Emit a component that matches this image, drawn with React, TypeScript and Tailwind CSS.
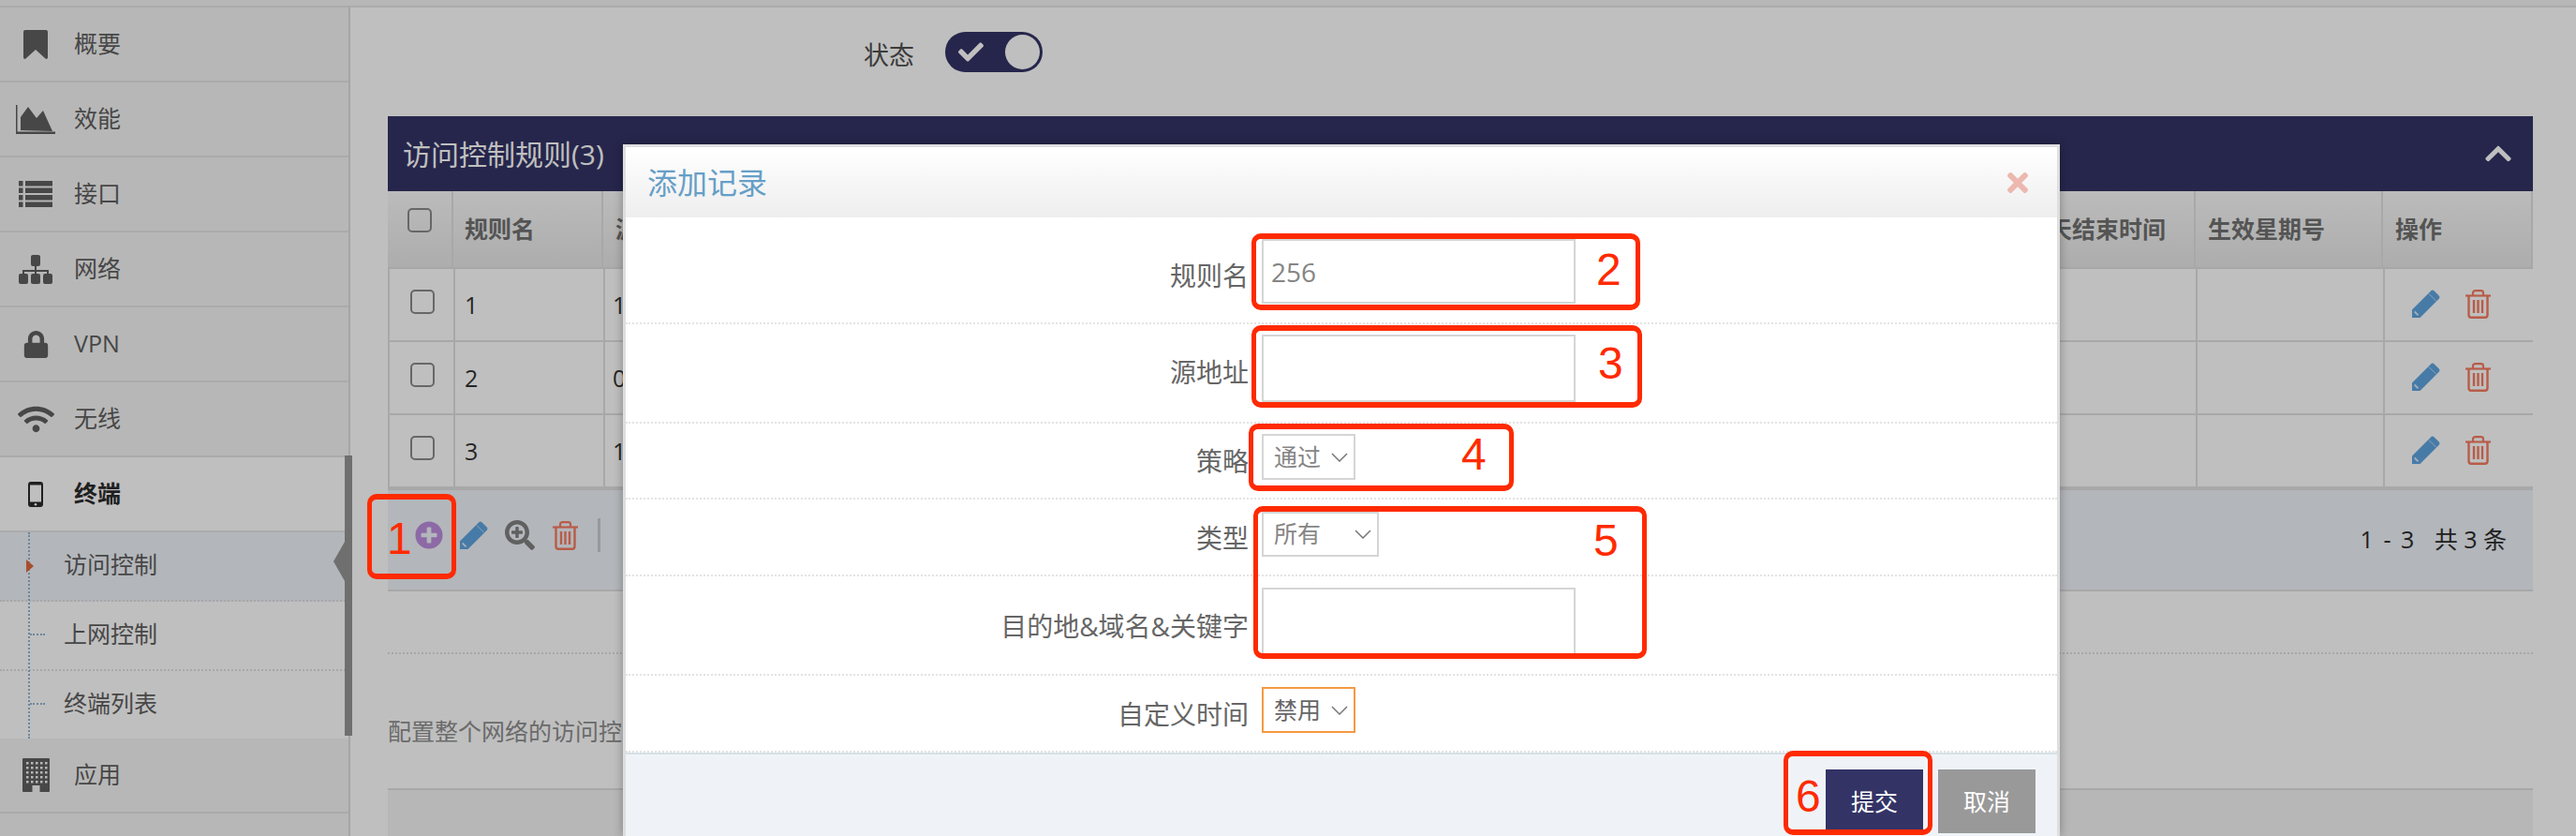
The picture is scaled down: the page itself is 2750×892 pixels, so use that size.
import React from 'react';
import {
  FaCheck,
  FaChevronUp,
  FaLock,
  FaPlusCircle,
  FaSearchPlus,
  FaTimes,
  FaWifi,
} from 'react-icons/fa';

const BookmarkIcon = () => (
  <svg width="26" height="31" viewBox="0 0 26 31" fill="currentColor">
    <path d="M2 0h22a2 2 0 0 1 2 2v27c0 2-1.500 2.500-2.500 1.500L13 21 2.500 30.500C1.500 31.500 0 31 0 29V2a2 2 0 0 1 2-2z" />
  </svg>
);

const AreaChartIcon = () => (
  <svg width="42" height="31" viewBox="0 0 42 31" fill="currentColor">
    <path d="M0 0h1.500v28.500H42V31H0z" />
    <path d="M5 27V13L13 2l9 12L29 6l10 22z" />
  </svg>
);

const ListIcon = () => (
  <svg width="36" height="29" viewBox="0 0 36 29" fill="currentColor">
    {[0, 7.500, 15, 22.500].map((y) => (
      <g key={y}>
        <rect x="0" y={y} width="4.500" height="5.500" />
        <rect x="7" y={y} width="29" height="5.500" />
      </g>
    ))}
  </svg>
);

const SitemapIcon = () => (
  <svg width="36" height="31" viewBox="0 0 36 31" fill="currentColor">
    <rect x="13" y="0" width="10" height="12" rx="2" />
    <path d="M17 12h2v4h13v5h-2v-3H19v3h-2v-3H6v3H4v-5h13z" />
    <rect x="0" y="20" width="10" height="11" rx="2" />
    <rect x="13" y="20" width="10" height="11" rx="2" />
    <rect x="26" y="20" width="10" height="11" rx="2" />
  </svg>
);

const PhoneIcon = () => (
  <svg width="16" height="27" viewBox="0 0 16 27">
    <rect x="0" y="0" width="16" height="27" rx="3" fill="currentColor" />
    <rect x="2" y="3.500" width="12" height="18" fill="#ffffff" />
    <circle cx="8" cy="24.200" r="1.300" fill="#ffffff" />
  </svg>
);

const BuildingIcon = () => (
  <svg width="29" height="36" viewBox="0 0 29 36">
    <rect width="29" height="36" rx="1" fill="currentColor" />
    {[4, 9, 14, 19, 24].map((y) =>
      [5, 10, 15, 20, 25].map((x) => (
        <rect key={`${x}-${y}`} x={x - 1} y={y} width="2.500" height="2.500" fill="#f5f5f5" />
      )),
    )}
    <rect x="10.500" y="29" width="8" height="7" fill="#f5f5f5" />
  </svg>
);

const PencilIcon = (props: { className?: string }) => (
  <svg width="30" height="30" viewBox="0 0 30 30" className={props.className}>
    <path
      fill="currentColor"
      d="M0 30v-8.500L20 1.500c1.200-1.200 2.500-1.200 3.700 0l4.800 4.800c1.200 1.200 1.200 2.500 0 3.700L8.500 30z"
    />
    <path stroke="#ffffff" strokeOpacity="0.6" strokeWidth="1" d="M18 4.500l7.500 7.500" />
    <path fill="#ffffff" fillOpacity="0.75" d="M3 22.500l4.500 4.500-2 .8-3.300-3.300z" />
  </svg>
);

const TrashIcon = (props: { className?: string }) => (
  <svg width="27" height="31" viewBox="0 0 27 31" fill="none" stroke="currentColor" className={props.className}>
    <path strokeWidth="2.200" d="M0 6.500h27" />
    <path strokeWidth="2.200" d="M8 6V3.500C8 2 9 1.200 10.500 1.200h6C18 1.200 19 2 19 3.500V6" />
    <path strokeWidth="2.400" d="M3.500 6.500V27c0 1.800 1 2.800 2.800 2.800h14.400c1.800 0 2.800-1 2.800-2.800V6.500" />
    <path strokeWidth="2.400" d="M9 11v14M13.500 11v14M18 11v14" />
  </svg>
);

const ChevronDown = () => (
  <svg width="18" height="10" viewBox="0 0 18 10" fill="none" stroke="#777777" strokeWidth="1.500">
    <path d="M1 1l8 8 8-8" />
  </svg>
);

const topNav = [
  { name: '概要', icon: <BookmarkIcon /> },
  { name: '效能', icon: <AreaChartIcon /> },
  { name: '接口', icon: <ListIcon /> },
  { name: '网络', icon: <SitemapIcon /> },
  { name: 'VPN', icon: <FaLock className="text-[29px]" /> },
  { name: '无线', icon: <FaWifi className="text-[39px]" /> },
];

const NavItem = (props: { name: string; icon: React.ReactNode }) => {
  return (
    <div className="flex h-[80px] items-center border-b-2 border-[#e5e5e5] text-[25px] text-[#5f5f5f]">
      <div className="flex w-[76px] justify-center">{props.icon}</div>
      <div className="ml-[3px]">{props.name}</div>
    </div>
  );
};

const SubItem = (props: { name: string; active?: boolean; last?: boolean }) => {
  const { name, active, last } = props;
  return (
    <div
      className={`relative flex items-center pb-[2px] pl-[68px] text-[25px] text-[#5f5f5f] ${
        active ? 'bg-[#eff3f8]' : 'bg-white'
      } ${last ? 'h-[72px]' : 'h-[74px] border-b-2 border-dotted border-[#dfdfdf]'}`}
    >
      {!active && (
        <div className="absolute left-[32px] top-[34px] w-[16px] border-t-2 border-dotted border-[#8fb5d6]" />
      )}
      {name}
    </div>
  );
};

const Sidebar = () => {
  return (
    <aside className="relative w-[374px] shrink-0 border-r-2 border-[#dcdcdc] bg-[#f5f5f5]">
      {topNav.map((item) => (
        <NavItem key={item.name} {...item} />
      ))}
      <div className="flex h-[80px] items-center border-b-2 border-[#e5e5e5] bg-white text-[25px] font-bold text-[#2b2b2b]">
        <div className="flex w-[76px] justify-center">
          <PhoneIcon />
        </div>
        <div className="ml-[3px]">终端</div>
      </div>
      <div className="relative">
        <SubItem name="访问控制" active />
        <SubItem name="上网控制" />
        <SubItem name="终端列表" last />
        <div className="absolute bottom-0 left-[30px] top-0 border-l-2 border-dotted border-[#8fb5d6]" />
        <div className="absolute left-[28px] top-[29px] h-0 w-0 border-y-[7px] border-l-[8px] border-y-transparent border-l-[#e0693f]" />
      </div>
      <NavItem name="应用" icon={<BuildingIcon />} />
      <div className="absolute left-[356px] top-[570px] h-0 w-0 border-y-[21px] border-r-[12px] border-y-transparent border-r-[#959595]" />
      <div className="absolute left-[368px] top-[478px] h-[299px] w-[8px] bg-[#959595]" />
    </aside>
  );
};

const Checkbox = (props: { className?: string }) => {
  return (
    <div
      className={`h-[26px] w-[26px] rounded-[5px] border-2 border-[#8a8a8a] ${props.className}`}
    />
  );
};

const RowActions = () => {
  return (
    <div className="-mt-[2px] flex items-center gap-[27px] pl-[29px]">
      <PencilIcon className="text-[#5fa4df]" />
      <TrashIcon className="text-[#f67b61]" />
    </div>
  );
};

const rules = [
  { name: '1', source: '1' },
  { name: '2', source: '0' },
  { name: '3', source: '1' },
];

const RuleTable = () => {
  return (
    <section className="mt-[47px] text-[25px]">
      <div className="flex h-[80px] items-center justify-between bg-[#333366] pl-[16px] pr-[21px] text-[30px] text-white">
        <span>访问控制规则(3)</span>
        <FaChevronUp className="text-[32px]" />
      </div>
      <div className="grid h-[83px] grid-cols-[70px_160px_1700px_200px_160px] border-b-2 border-[#dfdfdf] bg-gradient-to-b from-[#fafafa] to-[#e7e7e7] font-bold text-[#707070]">
        <div className="border-r-2 border-[#e1e1e1] pl-[21px] pt-[18px]">
          <Checkbox />
        </div>
        <div className="flex items-center border-r-2 border-[#e1e1e1] pl-[12px]">规则名</div>
        <div className="flex items-center whitespace-nowrap border-r-2 border-[#e1e1e1] pl-[13px]">
          源地址
          <span className="ml-[1430px]">每天结束时间</span>
        </div>
        <div className="flex items-center border-r-2 border-[#e1e1e1] pl-[13px]">生效星期号</div>
        <div className="flex items-center border-r-2 border-[#e1e1e1] pl-[13px]">操作</div>
      </div>
      {rules.map((rule) => (
        <div
          key={rule.name}
          className="grid h-[78px] grid-cols-[72px_160px_1700px_200px_158px] border-b-2 border-[#e1e1e1] text-[#333333]"
        >
          <div className="flex items-center border-x-2 border-x-[#e1e1e1] pl-[22px]">
            <Checkbox className="-mt-[6px]" />
          </div>
          <div className="flex items-center border-r-2 border-[#e1e1e1] pl-[10px] pt-[2px]">{rule.name}</div>
          <div className="flex items-center border-r-2 border-[#e1e1e1] pl-[8px] pt-[2px]">{rule.source}</div>
          <div className="border-r-2 border-[#e1e1e1]" />
          <RowActions />
        </div>
      ))}
      <div className="h-[2px] bg-[#dfdfdf]" />
      <div className="flex h-[108px] items-center justify-between border-b-2 border-[#e1e1e1] bg-[#eff3f8] pl-[29px] pr-[28px]">
        <div className="-mt-[10px] flex items-center">
          <FaPlusCircle className="text-[30px] text-[#bc8dde]" />
          <PencilIcon className="ml-[18px] text-[#5fa4df]" />
          <FaSearchPlus className="ml-[18px] text-[32px] text-[#808080]" />
          <TrashIcon className="ml-[19px] text-[#f67b61]" />
          <div className="ml-[21px] h-[36px] w-[3px] bg-[#c8cdd2]" />
        </div>
        <div className="text-[#2b2b2b]">
          <span className="tracking-[2px]">1 - 3</span>&nbsp;&nbsp;&nbsp;共 3 条
        </div>
      </div>
    </section>
  );
};

const fieldLabel = 'flex w-[665px] items-center justify-end self-stretch pt-2 text-[28px] leading-[28px] text-[#666666]';
const rowLine = 'flex items-start gap-[14px] border-b-2 border-dotted border-[#e3e3e3]';
const inputBox = 'w-[335px] border-2 border-[#d5d5d5] bg-white px-[8px] text-[28px] text-[#858585] outline-none';

const Select = (props: { value: string; className: string; dark?: boolean }) => {
  const { value, className, dark } = props;
  return (
    <div
      className={`flex items-center justify-between border-2 pl-[11px] pr-[6px] text-[25px] ${className} ${
        dark ? 'text-[#666666]' : 'text-[#858585]'
      }`}
    >
      <span>{value}</span>
      <ChevronDown />
    </div>
  );
};

const AddRecordModal = () => {
  return (
    <div className="absolute left-[665px] top-[154px] h-[738px] w-[1534px] border-[3px] border-b-0 border-[#dedede] bg-white shadow-[0_0_10px_rgba(0,0,0,0.3)]">
      <div className="flex h-[75px] items-center justify-between bg-gradient-to-b from-white to-[#eeeeee] pl-[23px] pr-[26px]">
        <span className="text-[32px] text-[#669fc7]">添加记录</span>
        <FaTimes className="text-[32px] text-[#ecb8b0]" />
      </div>
      <div className={`${rowLine} pb-[20px] pt-[23px]`}>
        <div className={fieldLabel}>规则名</div>
        <input readOnly value="256" className={`${inputBox} h-[69px]`} />
      </div>
      <div className={`${rowLine} pb-[21px] pt-[11px]`}>
        <div className={fieldLabel}>源地址</div>
        <input readOnly value="" className={`${inputBox} h-[72px]`} />
      </div>
      <div className={`${rowLine} pb-[19px] pt-[11px]`}>
        <div className={fieldLabel}>策略</div>
        <Select value="通过" className="h-[49px] w-[100px] border-[#d5d5d5]" />
      </div>
      <div className={`${rowLine} pb-[19px] pt-[13px]`}>
        <div className={fieldLabel}>类型</div>
        <Select value="所有" className="h-[48px] w-[125px] border-[#d5d5d5]" />
      </div>
      <div className={`${rowLine} pb-[19px] pt-[12px]`}>
        <div className={fieldLabel}>目的地&amp;域名&amp;关键字</div>
        <input readOnly value="" className={`${inputBox} h-[73px]`} />
      </div>
      <div className={`${rowLine} pb-[19px] pt-[12px]`}>
        <div className={fieldLabel}>自定义时间</div>
        <Select value="禁用" dark className="h-[49px] w-[100px] border-[#f59942]" />
      </div>
      <div className="flex h-[90px] justify-end gap-[16px] border-t-2 border-[#d5e0e6] bg-[#eff3f8] pr-[23px] pt-[16px] text-[25px] text-white">
        <button className="h-[68px] w-[104px] bg-[#333366] pt-[2px]">提交</button>
        <button className="h-[68px] w-[104px] bg-[#999999] pt-[2px]">取消</button>
      </div>
    </div>
  );
};

const Annotations = () => {
  const mark = 'absolute rounded-[10px] border-x-[5px] border-y-[6px] border-[#ff2a00]';
  const digit = "absolute font-['Liberation_Sans',sans-serif] text-[48px] leading-none text-[#ff2a00]";
  return (
    <>
      <div className={`${mark} left-[392px] top-[527px] h-[91px] w-[95px]`} />
      <div className={`${mark} left-[1336px] top-[249px] h-[82px] w-[415px]`} />
      <div className={`${mark} left-[1336px] top-[347px] h-[88px] w-[417px]`} />
      <div className={`${mark} left-[1333px] top-[452px] h-[72px] w-[283px]`} />
      <div className={`${mark} left-[1338px] top-[540px] h-[163px] w-[420px]`} />
      <div className={`${mark} left-[1904px] top-[801px] h-[90px] w-[159px]`} />
      <span className={`${digit} left-[413px] top-[551px]`}>1</span>
      <span className={`${digit} left-[1704px] top-[264px]`}>2</span>
      <span className={`${digit} left-[1706px] top-[364px]`}>3</span>
      <span className={`${digit} left-[1560px] top-[461px]`}>4</span>
      <span className={`${digit} left-[1701px] top-[553px]`}>5</span>
      <span className={`${digit} left-[1917px] top-[826px]`}>6</span>
    </>
  );
};

export default function App() {
  return (
    <div className="relative h-[892px] w-[2750px] overflow-hidden bg-white font-['Open_Sans','Noto_Sans_CJK_SC',sans-serif]">
      <div className="h-[8px] border-b-2 border-[#e5e5e5] bg-[#f5f5f5]" />
      <div className="flex h-[884px]">
        <Sidebar />
        <main className="min-w-0 flex-1 pl-[40px] pr-[46px]">
          <div className="mt-[26px] flex h-[43px] items-center pl-[508px]">
            <span className="pt-[7px] text-[27px] text-[#4f4f4f]">状态</span>
            <div className="ml-[33px] flex h-[43px] w-[104px] items-center justify-between rounded-full bg-[#333366] pl-[14px] pr-[3px] text-white">
              <FaCheck className="text-[27px]" />
              <div className="h-[37px] w-[37px] rounded-full bg-white" />
            </div>
          </div>
          <RuleTable />
          <div className="mt-[65px] border-t-2 border-dotted border-[#dfdfdf]" />
          <p className="mt-[64px] whitespace-nowrap text-[25px] text-[#8f8f8f]">配置整个网络的访问控制规则</p>
          <div className="mt-[41px] h-[60px] border-t-2 border-[#e1e1e1] bg-[#f5f5f5]" />
        </main>
      </div>
      <div className="absolute inset-0 bg-black/25" />
      <AddRecordModal />
      <Annotations />
    </div>
  );
}
